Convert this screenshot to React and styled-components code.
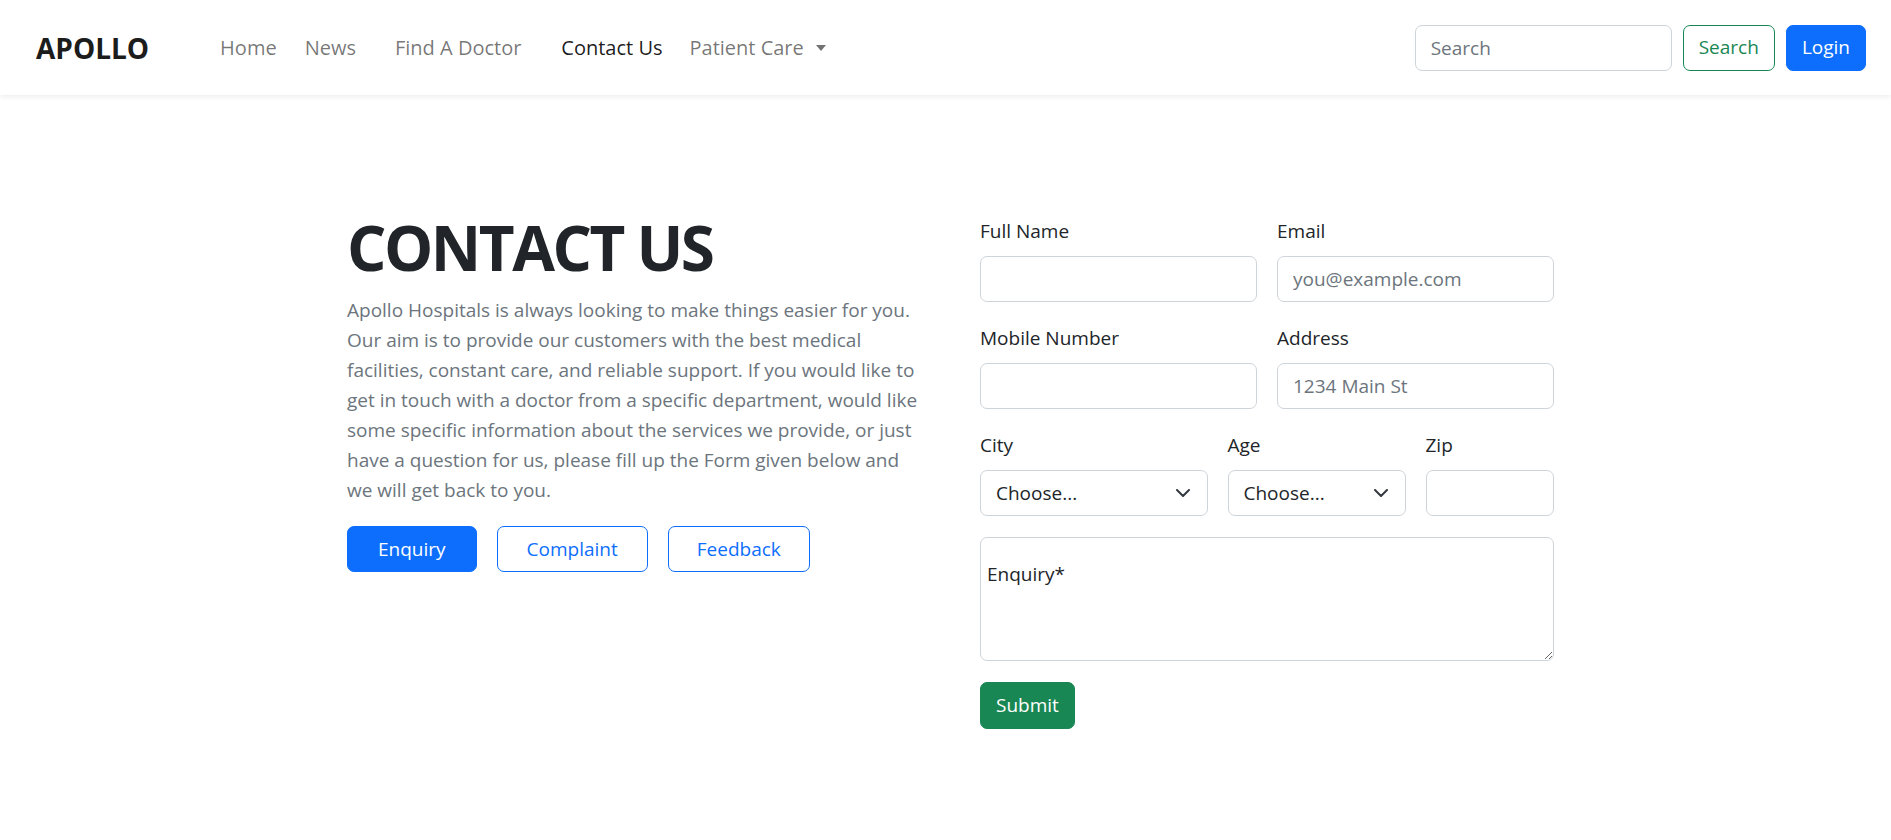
import styled, { createGlobalStyle, css } from "styled-components";

const GlobalStyle = createGlobalStyle`
  *, *::before, *::after {
    box-sizing: border-box;
  }
  body {
    margin: 0;
    font-family: "Open Sans", "Liberation Sans", sans-serif;
    font-size: 19px;
    line-height: 30px;
    color: #212529;
    background: #fff;
  }
`;

const Header = styled.header`
  height: 95px;
  display: flex;
  align-items: center;
  padding: 0 25px 0 36px;
  background: #fff;
  box-shadow: 0 2px 5px rgba(0, 0, 0, 0.075);
`;

const Brand = styled.a`
  font-size: 28px;
  font-weight: 700;
  line-height: 1;
  color: #1c1c1c;
  text-decoration: none;
  margin-right: 71px;
`;

const NavList = styled.ul`
  list-style: none;
  display: flex;
  align-items: center;
  margin: 0;
  padding: 0;
`;

const NavItem = styled.li`
  margin-left: ${(p) => p.$offset || 0}px;
`;

const NavLink = styled.a`
  display: inline-flex;
  align-items: center;
  font-size: 20px;
  font-weight: 500;
  text-decoration: none;
  color: ${(p) => (p.$active ? "rgba(0, 0, 0, 0.9)" : "rgba(0, 0, 0, 0.55)")};
  ${(p) =>
    p.$caret &&
    css`
      &::after {
        content: "";
        margin-left: 12px;
        border-top: 6px solid;
        border-left: 5.5px solid transparent;
        border-right: 5.5px solid transparent;
      }
    `}
`;

const SearchForm = styled.form`
  margin-left: auto;
  display: flex;
  align-items: center;
  gap: 11px;
`;

const Input = styled.input`
  width: ${(p) => p.$width || "100%"};
  height: 46px;
  padding: 0 15px;
  font: inherit;
  font-size: 19px;
  color: #212529;
  background: #fff;
  border: 1px solid #ced4da;
  border-radius: 7px;
  outline: none;
  &::placeholder {
    color: #6c757d;
  }
`;

const variants = {
  primary: css`
    background: #0d6efd;
    border-color: #0d6efd;
    color: #fff;
  `,
  outlinePrimary: css`
    background: #fff;
    border-color: #0d6efd;
    color: #0d6efd;
  `,
  success: css`
    background: #198754;
    border-color: #198754;
    color: #fff;
  `,
  outlineSuccess: css`
    background: #fff;
    border-color: #198754;
    color: #198754;
  `,
};

const Button = styled.button`
  height: ${(p) => p.$height || 46}px;
  padding: 0 ${(p) => p.$px || 15}px;
  font-family: inherit;
  font-size: 19px;
  line-height: 1;
  border: 1px solid;
  border-radius: 7px;
  cursor: pointer;
  ${(p) => variants[p.$variant]}
`;

const Main = styled.main`
  display: grid;
  grid-template-columns: 574px 574px;
  column-gap: 59px;
  justify-content: center;
  align-items: start;
  padding: 121px 0 0 10px;
`;

const Intro = styled.section``;

const Title = styled.h1`
  margin: -6px 0 11px;
  font-size: 62px;
  font-weight: 700;
  line-height: 1.2;
  letter-spacing: -2.5px;
  color: #212529;
`;

const Lead = styled.p`
  margin: 0 0 21px;
  color: #6c757d;
`;

const ButtonRow = styled.div`
  display: flex;
  gap: 20px;
`;

const Form = styled.form`
  display: grid;
  grid-template-columns: repeat(12, 1fr);
  column-gap: 20px;
  row-gap: 21px;
`;

const Field = styled.div`
  grid-column: span ${(p) => p.$span};
`;

const Label = styled.label`
  display: block;
  margin-bottom: 10px;
`;

const SelectWrap = styled.div`
  position: relative;
  svg {
    position: absolute;
    right: 18px;
    top: 50%;
    transform: translateY(-50%);
    pointer-events: none;
  }
`;

const Select = styled.select`
  width: 100%;
  height: 46px;
  padding: 0 40px 0 15px;
  font: inherit;
  font-size: 19px;
  color: #212529;
  background: #fff;
  border: 1px solid #ced4da;
  border-radius: 7px;
  appearance: none;
  outline: none;
`;

const TextArea = styled.textarea`
  display: block;
  width: 100%;
  height: 124px;
  padding: 21px 6px;
  font: inherit;
  font-size: 19px;
  line-height: 30px;
  color: #212529;
  border: 1px solid #ced4da;
  border-radius: 7px;
  resize: vertical;
  outline: none;
  &::placeholder {
    color: #212529;
  }
`;

const Chevron = () => (
  <svg width="14" height="8" viewBox="0 0 14 8" fill="none">
    <path
      d="M1 1l6 6 6-6"
      stroke="#343a40"
      strokeWidth="2"
      strokeLinecap="round"
      strokeLinejoin="round"
    />
  </svg>
);

const navItems = [
  { label: "Home", offset: 0 },
  { label: "News", offset: 28 },
  { label: "Find A Doctor", offset: 39 },
  { label: "Contact Us", offset: 40, active: true },
  { label: "Patient Care", offset: 27, caret: true },
];

const App = () => {
  return (
    <>
      <GlobalStyle />
      <Header>
        <Brand href="#">APOLLO</Brand>
        <NavList>
          {navItems.map((item) => (
            <NavItem key={item.label} $offset={item.offset}>
              <NavLink href="#" $active={item.active} $caret={item.caret}>
                {item.label}
              </NavLink>
            </NavItem>
          ))}
        </NavList>
        <SearchForm onSubmit={(e) => e.preventDefault()}>
          <Input $width="257px" placeholder="Search" />
          <Button $variant="outlineSuccess">Search</Button>
          <Button $variant="primary" $px={15}>
            Login
          </Button>
        </SearchForm>
      </Header>

      <Main>
        <Intro>
          <Title>CONTACT US</Title>
          <Lead>
            Apollo Hospitals is always looking to make things easier for you.
            Our aim is to provide our customers with the best medical
            facilities, constant care, and reliable support. If you would like
            to get in touch with a doctor from a specific department, would
            like some specific information about the services we provide, or
            just have a question for us, please fill up the Form given below
            and we will get back to you.
          </Lead>
          <ButtonRow>
            <Button $variant="primary" $px={30}>
              Enquiry
            </Button>
            <Button $variant="outlinePrimary" $px={29}>
              Complaint
            </Button>
            <Button $variant="outlinePrimary" $px={28}>
              Feedback
            </Button>
          </ButtonRow>
        </Intro>

        <Form onSubmit={(e) => e.preventDefault()}>
          <Field $span={6}>
            <Label>Full Name</Label>
            <Input />
          </Field>
          <Field $span={6}>
            <Label>Email</Label>
            <Input placeholder="you@example.com" />
          </Field>
          <Field $span={6}>
            <Label>Mobile Number</Label>
            <Input />
          </Field>
          <Field $span={6}>
            <Label>Address</Label>
            <Input placeholder="1234 Main St" />
          </Field>
          <Field $span={5}>
            <Label>City</Label>
            <SelectWrap>
              <Select defaultValue="">
                <option value="">Choose...</option>
              </Select>
              <Chevron />
            </SelectWrap>
          </Field>
          <Field $span={4}>
            <Label>Age</Label>
            <SelectWrap>
              <Select defaultValue="">
                <option value="">Choose...</option>
              </Select>
              <Chevron />
            </SelectWrap>
          </Field>
          <Field $span={3}>
            <Label>Zip</Label>
            <Input />
          </Field>
          <Field $span={12}>
            <TextArea placeholder="Enquiry*" />
          </Field>
          <Field $span={12}>
            <Button $variant="success" $height={47}>
              Submit
            </Button>
          </Field>
        </Form>
      </Main>
    </>
  );
};

export default App;
